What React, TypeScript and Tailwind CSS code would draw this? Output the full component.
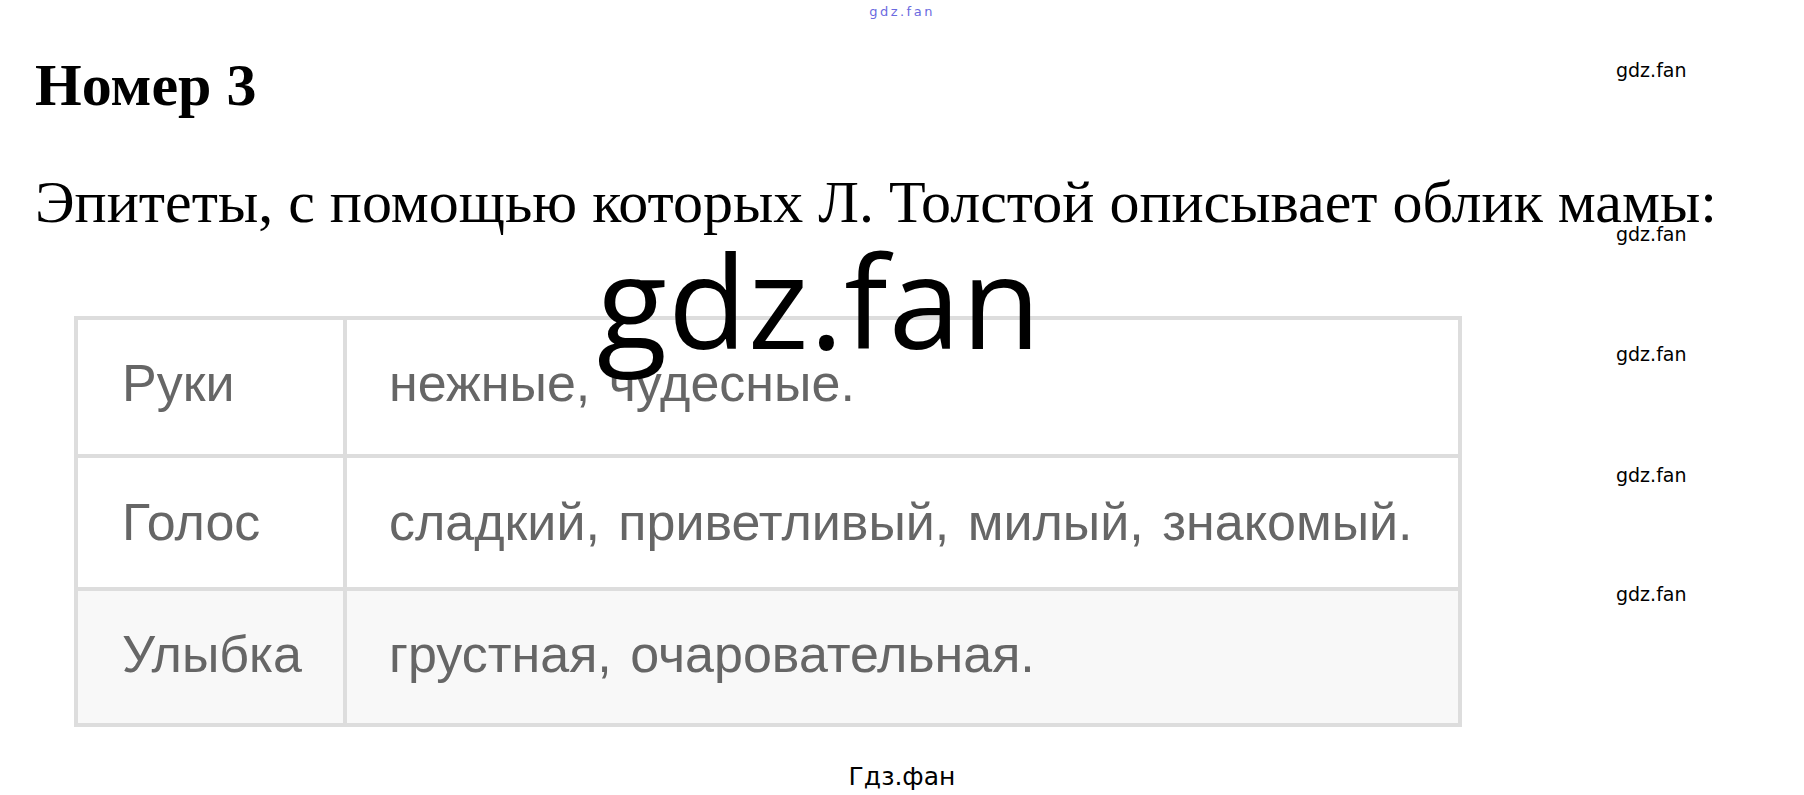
import React from "react";

const rows = [
  { k: "Руки", v: "нежные, чудесные.", h: "h-[134px]", pb: "pb-[8px]", bg: "bg-white" },
  { k: "Голос", v: "сладкий, приветливый, милый, знакомый.", h: "h-[133px]", pb: "pb-[2px]", bg: "bg-white" },
  { k: "Улыбка", v: "грустная, очаровательная.", h: "h-[136px]", pb: "pb-[7px]", bg: "bg-[#f8f8f8]" },
];

const marks = ["top-[61px]", "top-[225px]", "top-[345px]", "top-[466px]", "top-[585px]"];

export default function App() {
  return (
    <div className="relative w-[1804px] h-[795px] bg-white overflow-hidden">
      <div className="flex justify-center pt-[5px]">
        <span className="font-['DejaVu_Sans',sans-serif] text-[13px] leading-[13px] tracking-[2.5px] text-[#6a6ae0]">
          gdz.fan
        </span>
      </div>

      <h1 className="mt-[37px] ml-[35px] font-['Liberation_Serif',serif] font-bold text-[60px] leading-[60px] text-black">
        Номер 3
      </h1>

      <p className="mt-[57px] ml-[35px] font-['Liberation_Serif',serif] text-[60px] leading-[60px] text-black whitespace-nowrap">
        Эпитеты, с помощью которых Л. Толстой описывает облик мамы:
      </p>

      <div className="mt-[84px] ml-[74px] w-[1388px] border-[4px] border-[#dddddd] font-['Liberation_Sans',sans-serif] text-[52px] leading-[52px] text-[#666666]">
        {rows.map((r, i) => (
          <div
            key={r.k}
            className={`grid grid-cols-[269px_1fr] ${r.h} ${r.bg} ${i > 0 ? "border-t-[4px] border-[#dddddd]" : ""}`}
          >
            <div className={`flex items-center pl-[44px] ${r.pb} border-r-[4px] border-[#dddddd]`}>{r.k}</div>
            <div className={`flex items-center pl-[42px] ${r.pb} whitespace-nowrap [word-spacing:4px]`}>{r.v}</div>
          </div>
        ))}
      </div>

      <div className="mt-[37px] flex justify-center">
        <span className="font-['DejaVu_Sans',sans-serif] text-[25px] leading-[25px] text-black">Гдз.фан</span>
      </div>

      <div className="absolute left-[597px] top-[235px] font-['Open_Sans',sans-serif] text-[129px] leading-[129px] tracking-[1px] text-black">
        gdz.fan
      </div>

      {marks.map((t) => (
        <div
          key={t}
          className={`absolute left-[1616px] ${t} font-['DejaVu_Sans',sans-serif] text-[19px] leading-[19px] text-black`}
        >
          gdz.fan
        </div>
      ))}
    </div>
  );
}
